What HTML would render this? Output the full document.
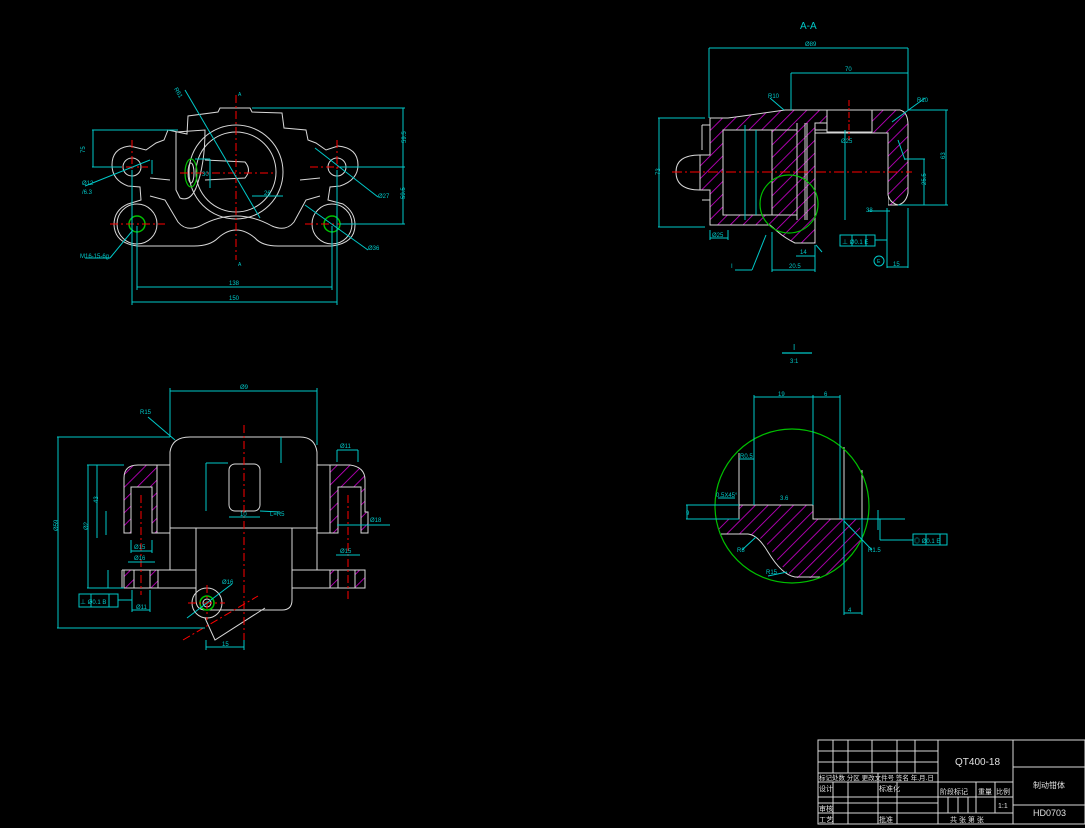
<!DOCTYPE html>
<html><head><meta charset="utf-8"><style>
html,body{margin:0;padding:0;background:#000;width:1085px;height:828px;overflow:hidden}
svg{display:block}
text{font-family:"Liberation Sans","Noto Sans CJK SC",sans-serif}
</style></head><body>
<svg width="1085" height="828" viewBox="0 0 1085 828" xmlns="http://www.w3.org/2000/svg">
<defs>
<pattern id="h" patternUnits="userSpaceOnUse" width="9" height="9" patternTransform="rotate(45)">
<line x1="0" y1="0" x2="0" y2="9" stroke="#d000d0" stroke-width="1.6"/>
</pattern>
<clipPath id="cI"><circle cx="792" cy="506" r="77"/></clipPath>
</defs>

<!-- ================= VIEW 1 (front) ================= -->
<g fill="none" stroke="#d8d8d8" stroke-width="1">
<path d="M187 134 L188 116 L218 112 L220 108 L250 108 L252 112 L282 113 L284 128 L306 130 L308 140 L316 143 L326 150 L338 146 Q358 148 358 165 Q358 180 340 186 L330 187 L328 200 L343 204 Q355 212 355 225 Q355 243 332 246 L278 246 Q262 246 255 238 Q236 222 218 238 Q210 246 194 246 L137 246 Q115 243 114 225 Q114 210 128 204 L141 200 L140 187 L128 186 Q112 180 112 165 Q112 148 130 146 L146 150 L156 143 L164 140 L168 130 L187 134 Z"/>
<circle cx="236" cy="172" r="47"/>
<circle cx="236" cy="172" r="40"/>
<path d="M176 132 L205 130 Q205 165 196 188 Q190 202 180 198 L176 190 Z"/>
<path d="M205 160 L245 162 Q252 170 245 178 L205 180"/>
<circle cx="132" cy="167" r="9"/>
<circle cx="337" cy="167" r="9"/>
<circle cx="137" cy="224" r="20"/>
<circle cx="332" cy="224" r="20"/>
<path d="M150 196 L165 200 L178 222 Q186 232 200 226 Q236 206 272 226 Q286 232 294 222 L306 200 L320 196"/>
<path d="M150 178 L170 180 M300 180 L320 178"/>
</g>
<ellipse cx="191" cy="173" rx="6" ry="14" fill="none" stroke="#00c000" stroke-width="1.2"/>
<ellipse cx="191" cy="173" rx="3" ry="10" fill="none" stroke="#d8d8d8"/>
<circle cx="137" cy="224" r="8" fill="none" stroke="#00c000" stroke-width="1.5"/>
<circle cx="332" cy="224" r="8" fill="none" stroke="#00c000" stroke-width="1.5"/>
<g stroke="#ff0000" stroke-width="1" stroke-dasharray="8 3 2 3">
<line x1="236" y1="95" x2="236" y2="260"/>
<line x1="132" y1="140" x2="132" y2="200"/><line x1="337" y1="140" x2="337" y2="200"/>
<line x1="110" y1="167" x2="148" y2="167"/><line x1="310" y1="167" x2="350" y2="167"/>
<line x1="110" y1="224" x2="165" y2="224"/><line x1="305" y1="224" x2="355" y2="224"/>
<line x1="180" y1="173" x2="275" y2="173"/>
</g>
<g fill="none" stroke="#00c8c8" stroke-width="1">
<line x1="92" y1="130" x2="178" y2="130"/><line x1="92" y1="167" x2="122" y2="167"/>
<line x1="93" y1="130" x2="93" y2="167"/>
<line x1="252" y1="108" x2="405" y2="108"/><line x1="340" y1="167" x2="405" y2="167"/><line x1="340" y1="224" x2="405" y2="224"/>
<line x1="403" y1="108" x2="403" y2="224"/>
<line x1="132" y1="170" x2="132" y2="305"/><line x1="337" y1="170" x2="337" y2="305"/>
<line x1="137" y1="226" x2="137" y2="290"/><line x1="332" y1="226" x2="332" y2="290"/>
<line x1="137" y1="287" x2="332" y2="287"/><line x1="132" y1="302" x2="337" y2="302"/>
<line x1="185" y1="90" x2="260" y2="218"/>
<line x1="85" y1="186" x2="150" y2="160"/>
<line x1="85" y1="258" x2="110" y2="258"/><line x1="110" y1="258" x2="133" y2="230"/>
<line x1="315" y1="148" x2="378" y2="197"/><line x1="305" y1="205" x2="368" y2="250"/>
<line x1="195" y1="159" x2="210" y2="159"/><line x1="210" y1="159" x2="210" y2="188"/>
<line x1="252" y1="196" x2="283" y2="196"/>
<line x1="152" y1="160" x2="152" y2="174"/>
</g>
<g fill="#00c8c8" font-size="6">
<text x="175" y="93" transform="rotate(60 178 90)">R61</text>
<text x="82" y="150" transform="rotate(-90 85 150)">75</text>
<text x="82" y="185">Ø12</text><text x="82" y="194">/6.3</text>
<text x="80" y="258">M16-15-6g</text>
<text x="378" y="198">Ø27</text><text x="368" y="250">Ø36</text>
<text x="229" y="285">138</text><text x="229" y="300">150</text>
<text x="398" y="145" transform="rotate(-90 401 140)">59.5</text>
<text x="398" y="200" transform="rotate(-90 401 196)">59.5</text>
<text x="202" y="176">30</text><text x="264" y="195">26</text>
<text x="238" y="96" font-size="5">A</text><text x="238" y="266" font-size="5">A</text>
</g>

<!-- ================= SECTION A-A ================= -->
<text x="800" y="29" fill="#00c8c8" font-size="10">A-A</text>
<path d="M710 118 L728 118 L743 116 L785 110 L827 110 L827 130 L872 130 L872 110 L900 110 Q908 112 908 125 L908 193 Q906 203 898 205 L888 205 L888 133 L872 133 L872 130 L827 130 L827 123 L815 123 L815 220 L815 243 L795 243 Q785 238 778 232 L770 225 L710 225 L710 190 L700 190 L700 155 L710 155 Z M723 130 L723 215 L772 215 L772 130 Z" fill="url(#h)" fill-rule="evenodd" stroke="#d8d8d8" stroke-width="1"/>
<rect x="723" y="130" width="49" height="85" fill="#000" stroke="#d8d8d8"/>
<rect x="827" y="110" width="45" height="22" fill="#000" stroke="#d8d8d8"/>
<rect x="816" y="134" width="72" height="88" fill="#000" stroke="none"/>
<g fill="none" stroke="#d8d8d8">
<path d="M700 155 Q676 155 676 172 Q676 190 700 190"/>
<path d="M702 125 L710 125 M702 125 L702 150 M702 200 L710 200"/>
<line x1="797" y1="123" x2="797" y2="220"/><line x1="807" y1="123" x2="807" y2="220"/>
<line x1="805" y1="123" x2="805" y2="220"/><line x1="815" y1="123" x2="815" y2="220"/>
<line x1="772" y1="130" x2="797" y2="130"/><line x1="772" y1="215" x2="797" y2="215"/>
<line x1="815" y1="133" x2="888" y2="133"/><line x1="815" y1="130" x2="827" y2="130"/>
<path d="M888 133 L888 195 Q890 203 898 205"/>
</g>
<line x1="672" y1="172" x2="912" y2="172" stroke="#ff0000" stroke-dasharray="10 3 2 3"/>
<line x1="849" y1="100" x2="849" y2="140" stroke="#ff0000" stroke-dasharray="6 2 2 2"/>
<circle cx="789" cy="204" r="29" fill="none" stroke="#00c000" stroke-width="1.2"/>
<g fill="none" stroke="#00c8c8">
<line x1="709" y1="48" x2="908" y2="48"/><line x1="709" y1="48" x2="709" y2="118"/><line x1="908" y1="48" x2="908" y2="110"/>
<line x1="791" y1="73" x2="908" y2="73"/><line x1="791" y1="73" x2="791" y2="110"/>
<line x1="658" y1="118" x2="705" y2="118"/><line x1="658" y1="227" x2="705" y2="227"/><line x1="659" y1="118" x2="659" y2="227"/>
<line x1="908" y1="110" x2="948" y2="110"/><line x1="898" y1="205" x2="948" y2="205"/><line x1="946" y1="110" x2="946" y2="205"/>
<line x1="905" y1="159" x2="925" y2="159"/><line x1="924" y1="159" x2="924" y2="205"/>
<line x1="745" y1="125" x2="745" y2="220"/><line x1="756" y1="130" x2="756" y2="215"/><line x1="845" y1="130" x2="845" y2="220"/>
<line x1="710" y1="230" x2="710" y2="240"/><line x1="728" y1="230" x2="728" y2="240"/><line x1="710" y1="238" x2="728" y2="238"/>
<line x1="772" y1="232" x2="772" y2="272"/><line x1="815" y1="245" x2="815" y2="272"/><line x1="772" y1="270" x2="815" y2="270"/>
<line x1="796" y1="256" x2="815" y2="256"/>
<line x1="887" y1="208" x2="887" y2="268"/><line x1="908" y1="208" x2="908" y2="268"/><line x1="887" y1="267" x2="908" y2="267"/>
<line x1="770" y1="98" x2="784" y2="110"/><line x1="892" y1="122" x2="925" y2="98"/><line x1="898" y1="140" x2="905" y2="160"/>
<line x1="735" y1="270" x2="752" y2="270"/><line x1="752" y1="270" x2="766" y2="235"/>
<line x1="816" y1="245" x2="822" y2="252"/>
<rect x="840" y="235" width="35" height="11"/><line x1="852" y1="235" x2="852" y2="246"/><line x1="866" y1="235" x2="866" y2="246"/>
<line x1="875" y1="240" x2="887" y2="240"/>
<circle cx="879" cy="261" r="5"/>
<line x1="868" y1="211" x2="890" y2="211"/>
</g>
<g fill="#00c8c8" font-size="6">
<text x="805" y="46">Ø89</text><text x="845" y="71">70</text>
<text x="768" y="98">R10</text><text x="917" y="102">R10</text>
<text x="653" y="176" transform="rotate(-90 656 172)">73</text>
<text x="940" y="158" transform="rotate(-90 943 156)">63</text>
<text x="920" y="185" transform="rotate(-90 923 182)">25.5</text>
<text x="712" y="237">Ø25</text><text x="789" y="268">20.5</text><text x="800" y="254">14</text>
<text x="893" y="266">15</text><text x="866" y="212">38</text>
<text x="841" y="143">Ø25</text><text x="731" y="268">I</text>
<text x="842" y="244">⊥ Ø0.1 E</text><text x="877" y="263" font-size="5">E</text>
</g>

<!-- ================= VIEW 3 (bottom-left) ================= -->
<g fill="none" stroke="#d8d8d8">
<path d="M170 528 L170 452 Q172 437 190 437 L300 437 Q315 437 317 452 L317 528 Z"/>
<line x1="157" y1="465" x2="170" y2="465"/><line x1="317" y1="465" x2="330" y2="465"/>
<path d="M170 528 L170 570 L196 570 L196 528 M292 528 L292 570 L317 570 L317 528"/>
<path d="M196 528 L196 600 Q196 610 206 610 L282 610 Q292 610 292 600 L292 528"/>
<path d="M122 570 L196 570 M122 570 L122 588 L196 588 M292 570 L365 570 L365 588 L292 588"/>
<rect x="229" y="464" width="31" height="47" rx="6"/>
<circle cx="207" cy="603" r="15"/>
<path d="M205 618 L215 640 L265 608"/>
<line x1="157" y1="465" x2="157" y2="533"/><line x1="330" y1="465" x2="330" y2="533"/>
<line x1="157" y1="533" x2="170" y2="533"/><line x1="317" y1="533" x2="330" y2="533"/>
</g>
<path d="M124 533 L124 478 Q124 465 138 465 L157 465 L157 533 L152 533 L152 487 L131 487 L131 533 Z" fill="url(#h)" stroke="#d8d8d8"/>
<path d="M330 533 L330 465 L350 465 Q365 467 365 480 L365 512 L368 512 L368 533 L361 533 L361 487 L338 487 L338 533 Z" fill="url(#h)" stroke="#d8d8d8"/>
<rect x="124" y="570" width="10" height="18" fill="url(#h)" stroke="#d8d8d8"/>
<rect x="150" y="570" width="8" height="18" fill="url(#h)" stroke="#d8d8d8"/>
<rect x="330" y="570" width="8" height="18" fill="url(#h)" stroke="#d8d8d8"/>
<rect x="355" y="570" width="10" height="18" fill="url(#h)" stroke="#d8d8d8"/>
<circle cx="207" cy="603" r="7" fill="none" stroke="#00c000" stroke-width="1.5"/>
<circle cx="207" cy="603" r="4" fill="none" stroke="#d8d8d8"/>
<g stroke="#ff0000" stroke-dasharray="8 3 2 3">
<line x1="244" y1="425" x2="244" y2="648"/>
<line x1="141" y1="495" x2="141" y2="595"/><line x1="348" y1="495" x2="348" y2="600"/>
<line x1="188" y1="603" x2="225" y2="603"/><line x1="207" y1="585" x2="207" y2="620"/>
<line x1="183" y1="640" x2="258" y2="596"/>
</g>
<g fill="none" stroke="#00c8c8">
<line x1="170" y1="391" x2="317" y2="391"/><line x1="170" y1="388" x2="170" y2="437"/><line x1="317" y1="388" x2="317" y2="445"/>
<line x1="57" y1="437" x2="170" y2="437"/><line x1="57" y1="628" x2="205" y2="628"/><line x1="58" y1="437" x2="58" y2="628"/>
<line x1="87" y1="465" x2="124" y2="465"/><line x1="87" y1="588" x2="124" y2="588"/><line x1="88" y1="465" x2="88" y2="588"/>
<line x1="97" y1="465" x2="97" y2="538"/>
<line x1="108" y1="570" x2="108" y2="588"/>
<line x1="106" y1="511" x2="106" y2="535"/>
<line x1="131" y1="540" x2="131" y2="553"/><line x1="152" y1="540" x2="152" y2="553"/><line x1="131" y1="551" x2="152" y2="551"/>
<line x1="128" y1="562" x2="155" y2="562"/>
<line x1="132" y1="590" x2="132" y2="612"/><line x1="150" y1="590" x2="150" y2="612"/><line x1="132" y1="610" x2="150" y2="610"/>
<rect x="79" y="594" width="39" height="13"/><line x1="91" y1="594" x2="91" y2="607"/><line x1="109" y1="594" x2="109" y2="607"/>
<line x1="118" y1="600" x2="132" y2="600"/>
<line x1="206" y1="463" x2="228" y2="463"/><line x1="206" y1="463" x2="206" y2="511"/>
<line x1="229" y1="517" x2="260" y2="517"/><line x1="260" y1="511" x2="280" y2="512"/>
<line x1="281" y1="437" x2="281" y2="463"/>
<line x1="148" y1="417" x2="175" y2="440"/>
<line x1="187" y1="618" x2="232" y2="584"/>
<line x1="206" y1="640" x2="206" y2="650"/><line x1="244" y1="640" x2="244" y2="650"/><line x1="206" y1="647" x2="244" y2="647"/>
<line x1="337" y1="450" x2="358" y2="450"/><line x1="337" y1="450" x2="337" y2="462"/><line x1="358" y1="450" x2="358" y2="462"/>
<line x1="336" y1="555" x2="360" y2="555"/>
<line x1="337" y1="525" x2="390" y2="525"/>
</g>
<g fill="#00c8c8" font-size="6">
<text x="240" y="389">Ø9</text><text x="140" y="414">R15</text>
<text x="56" y="535" transform="rotate(-90 55 532)">Ø59</text>
<text x="84" y="530" transform="rotate(-90 86 528)">Ø2</text>
<text x="94" y="505" transform="rotate(-90 95 502)">43</text>
<text x="270" y="516">L=R5</text><text x="240" y="516">10</text>
<text x="134" y="549">Ø15</text><text x="134" y="560">Ø16</text>
<text x="136" y="609">Ø11</text><text x="80" y="604">⊥ Ø0.1 B</text>
<text x="222" y="584">Ø16</text><text x="222" y="646">15</text>
<text x="340" y="448">Ø11</text><text x="340" y="553">Ø15</text><text x="370" y="522">Ø18</text>
</g>

<!-- ================= DETAIL I ================= -->
<text x="793" y="350" fill="#00c8c8" font-size="8">I</text>
<line x1="782" y1="353" x2="812" y2="353" stroke="#00c8c8" stroke-width="1.2"/>
<text x="790" y="363" fill="#00c8c8" font-size="6">3:1</text>
<g clip-path="url(#cI)">
<path d="M700 519 L739 519 L739 505 L754 505 L754 505 L813 505 L813 519 L860 519 L860 600 L820 578 L795 578 Q782 570 770 548 Q760 534 745 534 L700 534 Z" fill="url(#h)" stroke="none"/>
</g>
<g fill="none" stroke="#d8d8d8">
<path d="M718 519 L739 519 L739 505 L754 505 L813 505 L813 519 L842 519"/>
<path d="M721 534 L748 534 Q758 535 768 552 Q782 575 795 577 L820 577"/>
<line x1="844" y1="447" x2="844" y2="519"/><line x1="862" y1="470" x2="862" y2="560"/>
<line x1="739" y1="453" x2="739" y2="505"/>
</g>
<circle cx="792" cy="506" r="77" fill="none" stroke="#00c000" stroke-width="1.2"/>
<g fill="none" stroke="#00c8c8">
<line x1="754" y1="397" x2="813" y2="397"/><line x1="813" y1="397" x2="840" y2="397"/>
<line x1="754" y1="395" x2="754" y2="505"/><line x1="813" y1="395" x2="813" y2="505"/><line x1="840" y1="395" x2="840" y2="519"/>
<line x1="739" y1="459" x2="754" y2="459"/>
<line x1="686" y1="505" x2="739" y2="505"/><line x1="686" y1="519" x2="739" y2="519"/><line x1="687" y1="505" x2="687" y2="519"/>
<line x1="844" y1="519" x2="844" y2="615"/><line x1="862" y1="519" x2="862" y2="615"/><line x1="844" y1="613" x2="862" y2="613"/>
<line x1="842" y1="519" x2="905" y2="519"/><line x1="880" y1="519" x2="880" y2="540"/><line x1="880" y1="540" x2="913" y2="540"/>
<rect x="913" y="534" width="34" height="11"/><line x1="926" y1="534" x2="926" y2="545"/><line x1="940" y1="534" x2="940" y2="545"/>
<line x1="844" y1="521" x2="872" y2="550"/>
<line x1="742" y1="550" x2="756" y2="537"/><line x1="768" y1="576" x2="787" y2="572"/>
<line x1="718" y1="498" x2="735" y2="498"/>
<line x1="878" y1="510" x2="878" y2="530"/>
</g>
<g fill="#00c8c8" font-size="6">
<text x="778" y="396">19</text><text x="824" y="396">6</text>
<text x="740" y="458">R0.5</text><text x="716" y="497">0.5X45°</text>
<text x="737" y="552">R8</text><text x="766" y="574">R15</text><text x="868" y="552">R1.5</text>
<text x="848" y="612">4</text><text x="686" y="515">9</text>
<text x="914" y="543">◎ Ø0.1 E</text><text x="780" y="500">3.6</text>
</g>

<!-- ================= TITLE BLOCK ================= -->
<g fill="none" stroke="#d8d8d8" stroke-width="1">
<rect x="818" y="740" width="267" height="84"/>
<line x1="818" y1="751" x2="938" y2="751"/><line x1="818" y1="762" x2="938" y2="762"/>
<line x1="818" y1="773" x2="938" y2="773"/><line x1="818" y1="782" x2="1013" y2="782"/>
<line x1="818" y1="797" x2="1013" y2="797"/><line x1="818" y1="803" x2="938" y2="803"/>
<line x1="818" y1="813" x2="1013" y2="813"/>
<line x1="833" y1="740" x2="833" y2="773"/><line x1="848" y1="740" x2="848" y2="773"/>
<line x1="872" y1="740" x2="872" y2="773"/><line x1="897" y1="740" x2="897" y2="773"/>
<line x1="915" y1="740" x2="915" y2="773"/>
<line x1="833" y1="782" x2="833" y2="824"/><line x1="848" y1="782" x2="848" y2="824"/>
<line x1="878" y1="773" x2="878" y2="824"/><line x1="897" y1="782" x2="897" y2="824"/>
<line x1="938" y1="740" x2="938" y2="824"/><line x1="1013" y1="740" x2="1013" y2="824"/>
<line x1="1013" y1="767" x2="1085" y2="767"/><line x1="1013" y1="805" x2="1085" y2="805"/>
<line x1="948" y1="797" x2="948" y2="813"/><line x1="958" y1="797" x2="958" y2="813"/>
<line x1="968" y1="797" x2="968" y2="813"/><line x1="976" y1="782" x2="976" y2="813"/>
<line x1="995" y1="782" x2="995" y2="813"/>
</g>
<g fill="#e0e0e0" font-size="7">
<text x="955" y="765" font-size="10">QT400-18</text>
<text x="1033" y="788" font-size="8">制动钳体</text>
<text x="1033" y="816" font-size="9">HD0703</text>
<text x="819" y="780" font-size="6.5">标记处数 分区 更改文件号 签名 年.月.日</text>
<text x="819" y="791">设计</text><text x="879" y="791">标准化</text>
<text x="940" y="794">阶段标记</text><text x="978" y="794">重量</text><text x="996" y="794">比例</text>
<text x="998" y="808">1:1</text>
<text x="819" y="811">审核</text><text x="819" y="822">工艺</text><text x="879" y="822">批准</text>
<text x="950" y="822">共 张 第 张</text>
</g>
</svg>
</body></html>
